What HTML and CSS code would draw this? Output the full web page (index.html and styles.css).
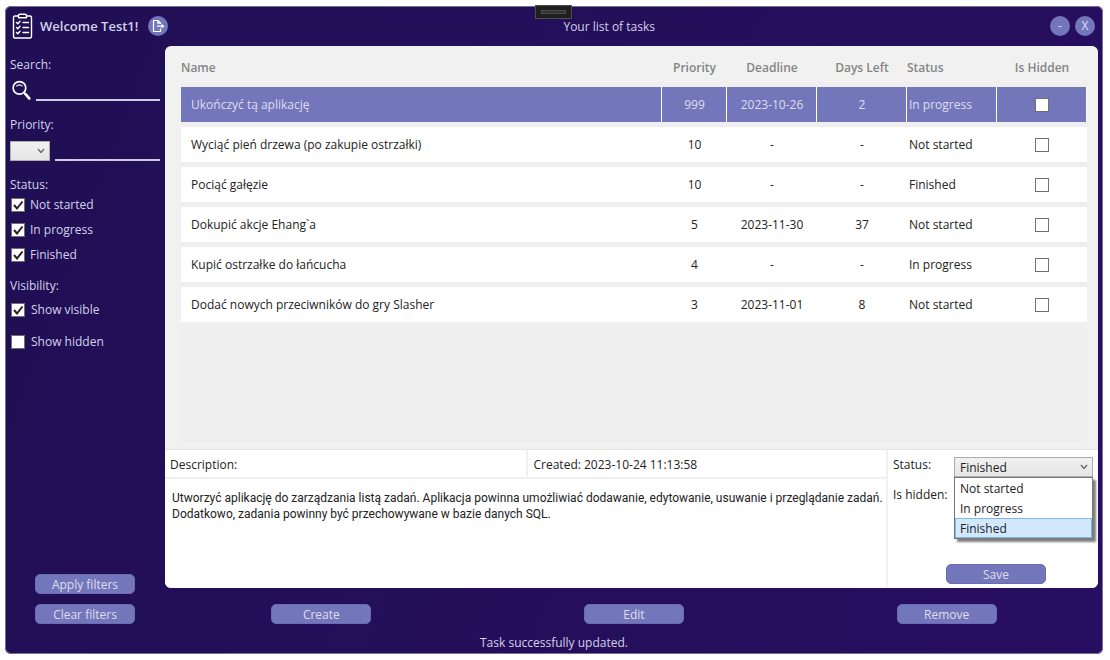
FILE: index.html
```html
<!DOCTYPE html>
<html lang="pl">
<head>
<meta charset="utf-8">
<title>Your list of tasks</title>
<link rel="stylesheet" href="styles.css">
</head>
<body>
<div class="window">
  <div class="grip"><span class="grip-bar"></span></div>
  <header class="topbar">
    <div class="brand">
      <svg class="logo" viewBox="0 0 20 26" fill="none" stroke="#fff" stroke-width="1.4" stroke-linecap="round" stroke-linejoin="round" aria-hidden="true">
        <path d="M6 3H2.500Q1 3 1 4.500V23.500Q1 25 2.500 25H17.500Q19 25 19 23.500V4.500Q19 3 17.500 3H14"/>
        <path d="M6 2.500Q6 1.200 7.500 1.200H12.500Q14 1.200 14 2.500V4.800H6Z"/>
        <path d="M4 9.500l1.300 1.200L7.500 8.300M4 14.500l1.300 1.200 2.200-2.400M4 19.500l1.300 1.200 2.200-2.400M10.500 9.500H16M10.500 14.500H16M10.500 19.500H16"/>
      </svg>
      <h1 class="welcome">Welcome Test1!</h1>
      <button class="round" type="button" aria-label="Log out">
        <svg class="exit" viewBox="0 0 14 14" fill="none" stroke="#fff" stroke-width="1.200" aria-hidden="true">
          <path d="M9.500 5V4L7 1.500H2.500V12.500H9.500V9.500M6 7.200H11"/>
          <path d="M6.800 1.500V4.200H9.500"/>
          <path d="M10.500 4.800l3 2.400-3 2.400z" fill="#fff" stroke="none"/>
        </svg>
      </button>
    </div>
    <div class="title">Your list of tasks</div>
    <div class="controls">
      <button class="round" type="button" aria-label="Minimize">-</button>
      <button class="round" type="button" aria-label="Close">X</button>
    </div>
  </header>

  <aside class="sidebar">
    <label class="caption" for="search">Search:</label>
    <div class="field">
      <svg class="lens" viewBox="0 0 20 20" fill="none" stroke="#fff" aria-hidden="true">
        <circle cx="9" cy="7.500" r="6" stroke-width="1.600"/>
        <path d="M6 6Q9 3.200 12 6" stroke-width="1"/>
        <path d="M13.300 11.800L15 13.500" stroke-width="1.500"/>
        <path d="M14.800 13.500l3.500 4" stroke-width="2.600" stroke-linecap="round"/>
      </svg>
      <input class="line" id="search" type="text">
    </div>
    <label class="caption" for="priority">Priority:</label>
    <div class="field">
      <span class="combo combo-small">
        <select class="select" aria-label="Priority comparison"><option></option></select>
        <svg class="chevron" viewBox="0 0 8 8" fill="none" stroke="#666" stroke-width="1.300" aria-hidden="true"><path d="M1 2l3 3.500L7 2"/></svg>
      </span>
      <input class="line" id="priority" type="text">
    </div>
    <fieldset class="group">
      <legend class="caption">Status:</legend>
      <label class="check"><input class="box" type="checkbox" checked>Not started</label>
      <label class="check"><input class="box" type="checkbox" checked>In progress</label>
      <label class="check"><input class="box" type="checkbox" checked>Finished</label>
    </fieldset>
    <fieldset class="group group-wide">
      <legend class="caption">Visibility:</legend>
      <label class="check"><input class="box" type="checkbox" checked>Show visible</label>
      <label class="check"><input class="box" type="checkbox">Show hidden</label>
    </fieldset>
    <div class="filters">
      <button class="button" type="button">Apply filters</button>
      <button class="button" type="button">Clear filters</button>
    </div>
  </aside>

  <main class="panel">
    <div class="list">
      <table class="tasks">
        <colgroup><col><col class="c-priority"><col class="c-date"><col class="c-date"><col class="c-date"><col class="c-date"></colgroup>
        <thead>
          <tr><th class="left">Name</th><th>Priority</th><th>Deadline</th><th>Days Left</th><th class="left">Status</th><th>Is Hidden</th></tr>
        </thead>
        <tbody>
          <tr class="selected"><td class="name">Ukończyć tą aplikację</td><td>999</td><td>2023-10-26</td><td>2</td><td class="state">In progress</td><td><input class="box" type="checkbox" aria-label="Is hidden"></td></tr>
          <tr><td class="name">Wyciąć pień drzewa (po zakupie ostrzałki)</td><td>10</td><td>-</td><td>-</td><td class="state">Not started</td><td><input class="box" type="checkbox" aria-label="Is hidden"></td></tr>
          <tr><td class="name">Pociąć gałęzie</td><td>10</td><td>-</td><td>-</td><td class="state">Finished</td><td><input class="box" type="checkbox" aria-label="Is hidden"></td></tr>
          <tr><td class="name">Dokupić akcje Ehang`a</td><td>5</td><td>2023-11-30</td><td>37</td><td class="state">Not started</td><td><input class="box" type="checkbox" aria-label="Is hidden"></td></tr>
          <tr><td class="name">Kupić ostrzałke do łańcucha</td><td>4</td><td>-</td><td>-</td><td class="state">In progress</td><td><input class="box" type="checkbox" aria-label="Is hidden"></td></tr>
          <tr><td class="name">Dodać nowych przeciwników do gry Slasher</td><td>3</td><td>2023-11-01</td><td>8</td><td class="state">Not started</td><td><input class="box" type="checkbox" aria-label="Is hidden"></td></tr>
        </tbody>
      </table>
    </div>
    <section class="details">
      <div class="about">
        <div class="meta">
          <div class="cell">Description:</div>
          <div class="cell">Created: 2023-10-24 11:13:58</div>
        </div>
        <p class="text">Utworzyć aplikację do zarządzania listą zadań. Aplikacja powinna umożliwiać dodawanie, edytowanie, usuwanie i przeglądanie zadań. Dodatkowo, zadania powinny być przechowywane w bazie danych SQL.</p>
      </div>
      <form class="edit">
        <div class="row">
          <label for="status">Status:</label>
          <span class="combo">
            <select class="select" id="status"><option>Finished</option><option>Not started</option><option>In progress</option></select>
            <svg class="chevron" viewBox="0 0 8 8" fill="none" stroke="#666" stroke-width="1.300" aria-hidden="true"><path d="M1 2l3 3.500L7 2"/></svg>
            <ul class="menu" role="listbox" aria-label="Status">
              <li class="option" role="option">Not started</li>
              <li class="option" role="option">In progress</li>
              <li class="option active" role="option" aria-selected="true">Finished</li>
            </ul>
          </span>
        </div>
        <div class="row">Is hidden:</div>
        <button class="button save" type="button">Save</button>
      </form>
    </section>
  </main>

  <div class="actions">
    <button class="button" type="button">Create</button>
    <button class="button" type="button">Edit</button>
    <button class="button" type="button">Remove</button>
  </div>
  <footer class="message" role="status">Task successfully updated.</footer>
</div>
</body>
</html>
```
FILE: styles.css
```css
* { box-sizing: border-box; }

body {
  margin: 0;
  padding: 6px 7px 6px 5px;
  background: #fff;
  font: 12px/16px "Open Sans", "Noto Sans", sans-serif;
  color: #222;
}

button, input, select { font: inherit; margin: 0; }

.window {
  position: relative;
  display: grid;
  grid-template-columns: 160px minmax(0, 1fr);
  grid-template-rows: 40px minmax(0, 1fr) 42px 24px;
  min-height: calc(100vh - 12px);
  border-radius: 6px;
  background: linear-gradient(110deg, #200f55, #280e60);
  box-shadow: inset 0 0 0 1px #777096;
  color: #d3d2e8;
}

.grip {
  position: absolute;
  top: -1px;
  left: 530px;
  width: 37px;
  height: 14px;
  padding: 4px 5px;
  border: 1px solid #4c4c4c;
  background: #1f1f1f;
}
.grip-bar {
  display: block;
  height: 4px;
  border: 1px solid #4c4c4c;
  background: #333;
}

.topbar { grid-column: 1 / -1; display: flex; align-items: center; }
.brand { flex: 0 0 160px; display: flex; align-items: center; padding-left: 7px; white-space: nowrap; }
.logo { flex: none; width: 21px; height: 26px; }
.welcome { margin: 0 10px 0 7px; font-size: 13px; line-height: 20px; font-weight: 600; }
.title { flex: 1; padding-top: 2px; text-align: center; }
.controls { display: flex; gap: 5px; padding-right: 8px; }
.round {
  flex: none;
  display: grid;
  place-items: center;
  width: 20px;
  height: 20px;
  padding: 0;
  border: 0;
  border-radius: 50%;
  background: #7476bb;
  color: #dedeef;
}
.exit { width: 14px; height: 14px; }

.sidebar { grid-row: 2 / 4; display: flex; flex-direction: column; padding: 9px 5px 0; }
.caption { display: block; padding: 0; line-height: 20px; }
.field { display: flex; align-items: flex-end; gap: 5px; height: 26px; margin-bottom: 14px; }
.lens { flex: none; width: 21px; height: 21px; }
.line {
  flex: 1;
  min-width: 0;
  height: 20px;
  padding: 0;
  border: 0;
  border-bottom: 2px solid #cccbe3;
  background: transparent;
  color: #d3d2e8;
}
.group { margin: 0; padding: 0; border: 0; min-width: 0; }
.check { display: flex; align-items: center; gap: 5px; height: 20px; margin-bottom: 5px; }
.group-wide { margin-top: 6px; padding-top: 3px; }
.group-wide .check { height: 22px; gap: 6px; margin-bottom: 10px; }
.filters { display: flex; flex-direction: column; align-items: center; gap: 10px; margin-top: auto; padding-bottom: 6px; }

.box {
  appearance: none;
  flex: none;
  width: 14px;
  height: 14px;
  border: 1px solid #707070;
  background: #fff;
  vertical-align: middle;
}
.check .box { margin-left: 1px; }
.box:checked {
  background: #fff url("data:image/svg+xml,%3Csvg xmlns='http://www.w3.org/2000/svg' viewBox='0 0 12 12'%3E%3Cpath d='M2 6l3 3.500L10.500 2.500' fill='none' stroke='%23212121' stroke-width='2'/%3E%3C/svg%3E");
}

.button {
  width: 100px;
  height: 20px;
  padding: 1px 0 0;
  border: 1px solid #696bb3;
  border-radius: 5px;
  background: #7476bb;
  color: #dedeef;
  line-height: 17px;
}

.panel {
  display: flex;
  flex-direction: column;
  margin-right: 5px;
  overflow: hidden;
  border-radius: 6px;
  background: #f1f1f1;
  color: #222;
}
.list { flex: 1; margin: 0 11px 6px 16px; background: linear-gradient(#f1f1f1 36px, #efefef 36px); }

.tasks { width: 100%; table-layout: fixed; border-collapse: separate; border-spacing: 0; }
.c-priority { width: 65px; }
.c-date { width: 90px; }
.tasks th { height: 41px; padding: 3px 0 0; color: #858585; font-size: 12px; font-weight: 600; text-align: center; }
.tasks th.left { text-align: left; }
.tasks td {
  height: 40px;
  padding: 0;
  border-bottom: 5px solid #efefef;
  background: #fff;
  text-align: center;
  box-shadow: inset -1px 0 #fff;
}
.tasks td.name { padding-left: 10px; text-align: left; }
.tasks td.state { padding-left: 2px; text-align: left; }
.tasks .selected td { background: #7476bb; color: #dedeef; }

.details { flex: none; display: grid; grid-template-columns: minmax(0, 1fr) 210px; min-height: 139px; background: #fff; border-top: 1px solid #e4e4e4; }
.about { border-right: 2px solid #f1f1f1; }
.meta { display: grid; grid-template-columns: 1fr 1fr; border-bottom: 2px solid #f1f1f1; }
.cell { padding: 7px 5px 4px; }
.cell + .cell { border-left: 2px solid #f1f1f1; padding-left: 6px; }
.text { margin: 0; padding: 11px 1px 11px 7px; font-family: Roboto, "Open Sans", sans-serif; }
.edit { display: flex; flex-direction: column; padding: 0 5px 4px; }
.row { display: grid; grid-template-columns: 61px 1fr; align-items: center; height: 30px; }
.combo { position: relative; display: block; margin-top: 4px; }
.combo-small { flex: 0 0 40px; margin: 0; }
.select {
  display: block;
  appearance: none;
  width: 100%;
  height: 20px;
  padding: 1px 5px 0;
  border: 1px solid #acacac;
  border-radius: 0;
  background: linear-gradient(#f1f1f1, #e5e5e5);
  color: #222;
}
.chevron { position: absolute; top: 6px; right: 5px; width: 8px; height: 8px; pointer-events: none; }
.menu {
  position: absolute;
  top: 20px;
  left: 0;
  right: 0;
  z-index: 1;
  margin: 0;
  padding: 0;
  border: 1px solid #777;
  background: #fff;
  box-shadow: 3px 3px 2px rgba(0, 0, 0, 0.5);
  list-style: none;
}
.option { height: 20px; padding: 2px 4px 0; border: 1px solid transparent; }
.option.active { border-color: #84b6e8; background: #d1e8ff; }
.save { margin: auto 47px 0 auto; }

.actions { display: grid; grid-template-columns: repeat(3, 1fr); justify-items: center; align-items: center; padding-top: 10px; }
.message { grid-column: 1 / -1; padding-top: 5px; text-align: center; }
```
